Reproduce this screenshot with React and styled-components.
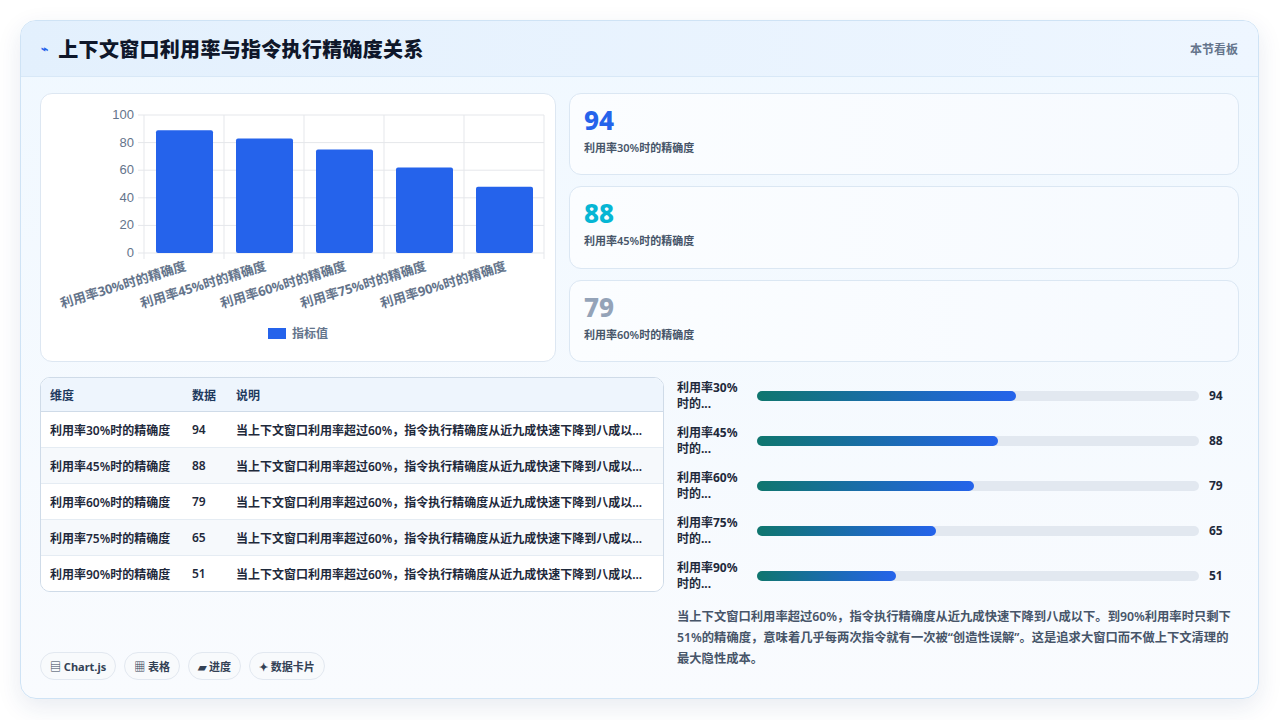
import React from "react";
import styled, { createGlobalStyle } from "styled-components";

const G = createGlobalStyle`
  body{margin:0;background:#fff;font-family:"Noto Sans","Noto Sans CJK SC",sans-serif;}
`;
const Page = styled.div`width:1280px;height:720px;box-sizing:border-box;padding:20px 21px 21px 20px;`;
const Card = styled.div`height:100%;box-sizing:border-box;border:1px solid #cfe3f5;border-radius:16px;overflow:hidden;
  background:linear-gradient(180deg,#f0f8ff 0%,#f9fbfe 100%);box-shadow:0 8px 24px rgba(30,60,120,.10);display:flex;flex-direction:column;`;
const Header = styled.div`height:55px;flex:none;display:flex;align-items:center;justify-content:space-between;padding:0 20px;
  background:linear-gradient(90deg,#e3f0fd,#eef6ff);border-bottom:1px solid #d8e8f7;`;
const Title = styled.h1`margin:0;font-size:20px;font-weight:800;color:#0f172a;display:flex;align-items:center;gap:10px;letter-spacing:0.3px;`;
const Tag = styled.span`font-size:12px;color:#64748b;font-weight:600;`;
const Body = styled.div`flex:1;padding:16px 19px 18px 19px;display:flex;flex-direction:column;gap:15px;`;
const TopRow = styled.div`display:grid;grid-template-columns:516px 1fr;gap:13px;height:269px;`;
const Panel = styled.div`background:#fff;border:1px solid #dde7f2;border-radius:12px;`;
const Stats = styled.div`display:grid;grid-template-rows:repeat(3,1fr);gap:11px;`;
const Stat = styled.div`background:linear-gradient(90deg,#fbfdff,#f6faff);border:1px solid #dbe7f3;border-radius:12px;padding:10px 14px;display:flex;flex-direction:column;gap:3px;`;
const Big = styled.div`font-size:26px;font-weight:800;color:${p=>p.c};line-height:32px;`;
const Small = styled.div`font-size:11px;color:#475569;font-weight:600;`;
const BottomRow = styled.div`display:grid;grid-template-columns:624px 1fr;gap:13px;flex:1;`;
const Left = styled.div`display:flex;flex-direction:column;justify-content:space-between;`;
const Table = styled.table`width:100%;border-collapse:collapse;background:#fff;border-spacing:0;
  font-size:12px;font-weight:600;color:#1e293b;
  th{background:#eef5fd;color:#1e3a5f;text-align:left;height:33px;padding:0 9px;border-bottom:1px solid #cfdbe8;}
  td{height:35px;padding:0 9px;border-bottom:1px solid #e5ecf3;white-space:nowrap;}
  tr:nth-child(even) td{background:#f6f9fc;}
  tr:last-child td{border-bottom:none;}`;
const TableWrap = styled.div`border:1px solid #cfdbe8;border-radius:10px;overflow:hidden;`;
const Chips = styled.div`display:flex;gap:8px;`;
const Chip = styled.span`font-size:11px;font-weight:700;color:#334155;background:#f8fafc;border:1px solid #e2e8f0;border-radius:14px;padding:5px 9px;`;
const Right = styled.div`display:flex;flex-direction:column;margin-top:-4px;`;
const BarRow = styled.div`display:grid;grid-template-columns:70px 1fr 30px;gap:10px;align-items:center;height:45px;`;
const BarLabel = styled.div`font-size:12px;font-weight:700;color:#1e293b;line-height:16px;`;
const Track = styled.div`height:10px;border-radius:5px;background:#e2e8f0;`;
const Fill = styled.div`height:100%;border-radius:5px;background:linear-gradient(90deg,#0f766e,#2563eb);`;
const Val = styled.div`font-size:12px;font-weight:700;color:#1e293b;`;
const Note = styled.p`margin:8px 0 0;font-size:12.3px;line-height:21px;color:#475569;font-weight:600;`;

const labels=["利用率30%时的精确度","利用率45%时的精确度","利用率60%时的精确度","利用率75%时的精确度","利用率90%时的精确度"];
const vals=[94,88,79,65,51];
const chartVals=[89,83,75,62,48];
const desc="当上下文窗口利用率超过60%，指令执行精确度从近九成快速下降到八成以...";

function Chart(){
  const x0=103,x1=503,y0=21,y1=159;
  return <svg width="514" height="267" viewBox="0 0 514 267" style={{display:"block"}}>
    {[0,20,40,60,80,100].map(v=>{const y=y1-(v/100)*(y1-y0);return <g key={v}>
      <line x1={x0-6} x2={x1} y1={y} y2={y} stroke="#e5e7eb"/>
      <text x={x0-10} y={y+4} textAnchor="end" fontSize="13" fill="#64748b" fontFamily="Liberation Sans">{v}</text></g>;})}
    {[0,1,2,3,4,5].map(i=><line key={i} x1={x0+i*80} x2={x0+i*80} y1={y0} y2={y1+6} stroke="#e5e7eb"/>)}
    {chartVals.map((v,i)=>{const h=(v/100)*(y1-y0);return <rect key={i} x={x0+12+i*80} y={y1-h} width="57" height={h} rx="2" fill="#2563eb"/>;})}
    {labels.map((l,i)=><text key={i} transform={`translate(${x0+40+i*80+3},${y1+17}) rotate(-17)`} textAnchor="end" fontSize="13" fontWeight="700" fill="#64748b">{l}</text>)}
    <rect x="227" y="234" width="18" height="11" fill="#2563eb"/>
    <text x="251" y="244" fontSize="12" fontWeight="600" fill="#64748b">指标值</text>
  </svg>;
}

export default function App(){
  return <Page><G/><Card>
    <Header><Title><span style={{color:"#2563eb",fontSize:12}}>⌁</span>上下文窗口利用率与指令执行精确度关系</Title><Tag>本节看板</Tag></Header>
    <Body>
      <TopRow>
        <Panel><Chart/></Panel>
        <Stats>
          <Stat><Big c="#2563eb">94</Big><Small>利用率30%时的精确度</Small></Stat>
          <Stat><Big c="#06b6d4">88</Big><Small>利用率45%时的精确度</Small></Stat>
          <Stat><Big c="#94a3b8">79</Big><Small>利用率60%时的精确度</Small></Stat>
        </Stats>
      </TopRow>
      <BottomRow>
        <Left>
          <TableWrap><Table>
            <thead><tr><th style={{width:124}}>维度</th><th style={{width:26}}>数据</th><th>说明</th></tr></thead>
            <tbody>{labels.map((l,i)=><tr key={i}><td>{l}</td><td>{vals[i]}</td><td>{desc}</td></tr>)}</tbody>
          </Table></TableWrap>
          <Chips><Chip>▤ Chart.js</Chip><Chip>▦ 表格</Chip><Chip>▰ 进度</Chip><Chip>✦ 数据卡片</Chip></Chips>
        </Left>
        <Right>
          {vals.map((v,i)=><BarRow key={i}><BarLabel>{labels[i].slice(0,6)}<br/>时的...</BarLabel>
            <Track><Fill style={{width:`${[58.5,54.5,49,40.5,31.5][i]}%`}}/></Track><Val>{v}</Val></BarRow>)}
          <Note>当上下文窗口利用率超过60%，指令执行精确度从近九成快速下降到八成以下。到90%利用率时只剩下51%的精确度，意味着几乎每两次指令就有一次被“创造性误解”。这是追求大窗口而不做上下文清理的最大隐性成本。</Note>
        </Right>
      </BottomRow>
    </Body>
  </Card></Page>;
}
